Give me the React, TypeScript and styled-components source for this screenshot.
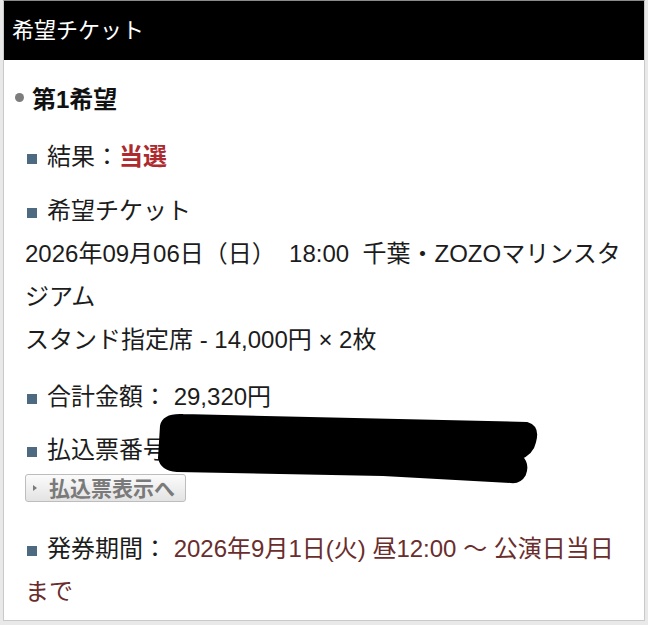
import { FC } from "react";
import styled, { createGlobalStyle } from "styled-components";

const GlobalStyle = createGlobalStyle`
  html, body {
    margin: 0;
    padding: 0;
    background: #e9e9e9;
  }
  body {
    font-family: "Liberation Sans", "Noto Sans CJK JP", sans-serif;
    color: #1c1c1c;
  }
`;

const Redaction: FC = () => (
  <Scribble width="385" height="75" viewBox="0 0 385 75">
    <path
      d="M8,14 Q10,4 28,5 L372,13 Q382,16 378,30 Q376,40 364,45 Q372,52 368,62 Q364,69 356,68 L228,61 L22,57 Q8,56 6,46 Z"
      fill="#000"
      stroke="#000"
      strokeWidth="6"
      strokeLinejoin="round"
    />
  </Scribble>
);

export default function App() {
  return (
    <>
      <GlobalStyle />
      <Panel>
        <Header>希望チケット</Header>
        <Content>
          <Heading>
            <Dot />
            第1希望
          </Heading>
          <List>
            <Item>
              <Square />
              結果：<Win>当選</Win>
            </Item>
            <Item>
              <Square />
              希望チケット
              <br />
              2026年09月06日（日）&nbsp; 18:00&nbsp; 千葉・ZOZOマリンスタジアム
              <br />
              スタンド指定席 - 14,000円 × 2枚
            </Item>
            <Item $gap={14}>
              <Square />
              合計金額： 29,320円
            </Item>
            <Item $gap={10}>
              <Square />
              払込票番号
              <Redaction />
            </Item>
            <SlipButton type="button">
              <Arrow />
              払込票表示へ
            </SlipButton>
            <Item $gap={25}>
              <Square />
              発券期間：{" "}
              <Period>2026年9月1日(火) 昼12:00 ～ 公演日当日まで</Period>
            </Item>
          </List>
        </Content>
      </Panel>
    </>
  );
}

const Panel = styled.div`
  margin: 0 3px;
  background: #fff;
  border: 1px solid #c9c9c9;
  border-top: 1px solid #8a8a8a;
`;

const Header = styled.div`
  height: 59px;
  line-height: 59px;
  padding-left: 8px;
  background: #000;
  color: #fff;
  font-size: 22px;
`;

const Content = styled.div`
  padding: 16px 12px 7px 21px;
`;

const Heading = styled.div`
  display: flex;
  align-items: center;
  margin-left: -10px;
  height: 43px;
  font-size: 24px;
  font-weight: 700;
  color: #111;
`;

const Dot = styled.span`
  width: 9px;
  height: 9px;
  margin-right: 8px;
  border-radius: 50%;
  background: #7d7d7d;
`;

const List = styled.div`
  margin-top: 16px;
`;

const Item = styled.div<{ $gap?: number }>`
  position: relative;
  margin-top: ${(p) => p.$gap ?? 11}px;
  font-size: 24px;
  line-height: 43px;

  &:first-child {
    margin-top: 0;
  }
`;

const Square = styled.span`
  display: inline-block;
  width: 10px;
  height: 10px;
  margin: 0 10px 0 2px;
  background: #4d6a80;
  vertical-align: 1px;
`;

const Win = styled.span`
  color: #ad2a2e;
  font-weight: 700;
`;

const Period = styled.span`
  color: #6a2d2d;
`;

const Scribble = styled.svg`
  position: absolute;
  left: 130px;
  top: -16px;
`;

const SlipButton = styled.button`
  display: flex;
  align-items: center;
  margin-top: 3px;
  height: 28px;
  padding: 0 10px 0 7px;
  border: 1px solid #bdbdbd;
  border-radius: 3px;
  background: linear-gradient(#fbfbfb, #e3e3e3);
  color: #7a7a7a;
  font-family: "Liberation Sans", "Noto Sans CJK JP", sans-serif;
  font-size: 21px;
  font-weight: 700;
  line-height: 1;
`;

const Arrow = styled.span`
  width: 0;
  height: 0;
  margin-right: 12px;
  border-top: 3px solid transparent;
  border-bottom: 3px solid transparent;
  border-left: 4px solid #7a7a7a;
`;
